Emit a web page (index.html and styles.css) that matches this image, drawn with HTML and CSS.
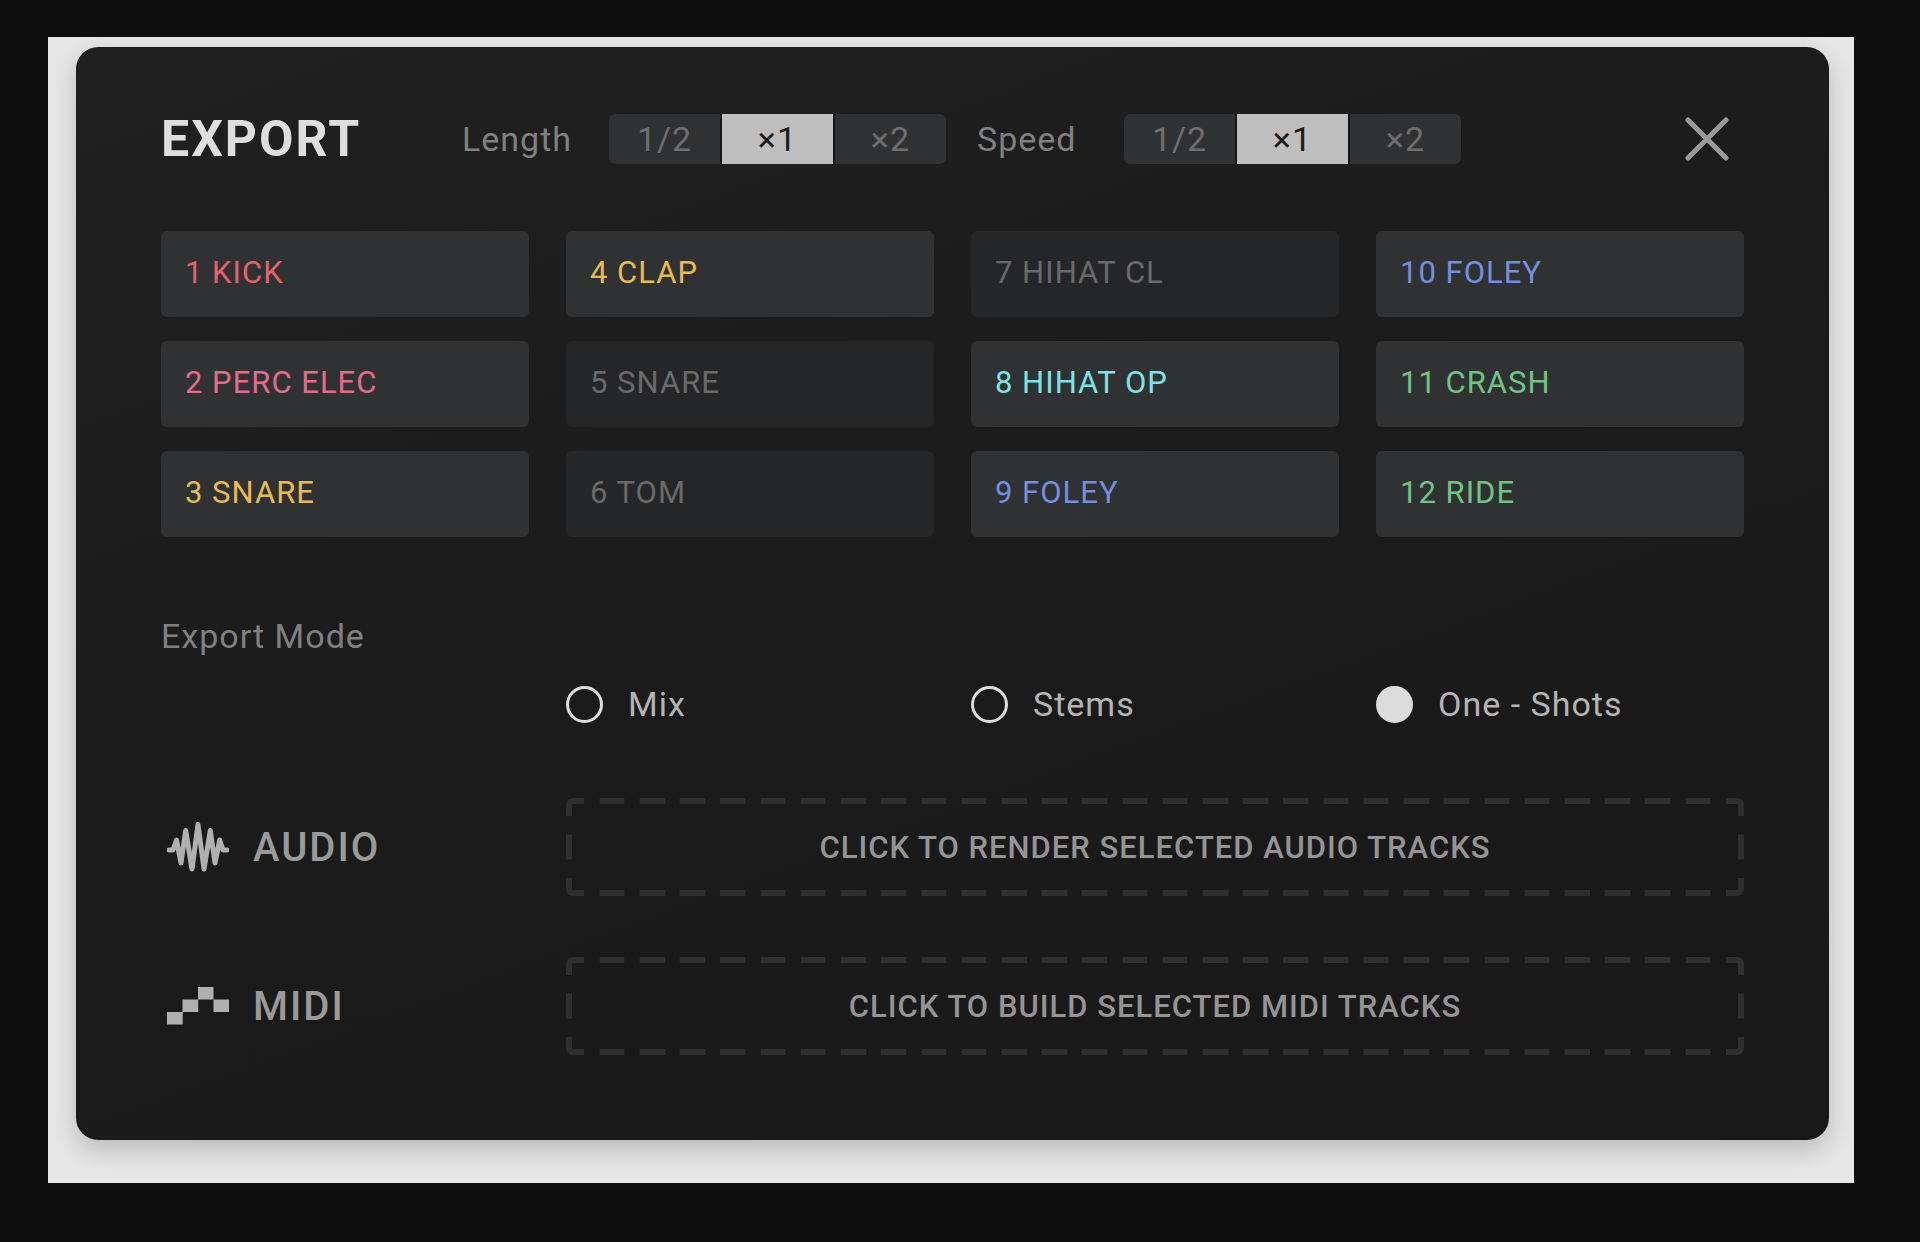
FILE: index.html
```html
<!DOCTYPE html>
<html lang="en">
<head>
  <meta charset="UTF-8">
  <meta name="viewport" content="width=device-width, initial-scale=1.0">
  <title>Export</title>
  <link rel="stylesheet" href="styles.css">
</head>
<body>

  <main class="stage">
    <section class="panel">

      <header class="header">
        <h1>EXPORT</h1>
        <div class="option" role="group" aria-labelledby="lengthLabel">
          <span class="option-label" id="lengthLabel">Length</span>
          <div class="segments">
            <button type="button">1/2</button>
            <button type="button" class="active">×1</button>
            <button type="button">×2</button>
          </div>
        </div>
        <div class="option" role="group" aria-labelledby="speedLabel">
          <span class="option-label" id="speedLabel">Speed</span>
          <div class="segments">
            <button type="button">1/2</button>
            <button type="button" class="active">×1</button>
            <button type="button">×2</button>
          </div>
        </div>
        <button type="button" class="close" aria-label="Close">
          <svg width="44" height="44" viewBox="0 0 44 44" aria-hidden="true">
            <path d="M3 3L41 41M41 3L3 41" />
          </svg>
        </button>
      </header>

      <!-- Tracks, filled column by column -->
      <div class="tracks">
        <button type="button" class="track red">1 KICK</button>
        <button type="button" class="track pink">2 PERC ELEC</button>
        <button type="button" class="track yellow">3 SNARE</button>
        <button type="button" class="track yellow">4 CLAP</button>
        <button type="button" class="track off">5 SNARE</button>
        <button type="button" class="track off">6 TOM</button>
        <button type="button" class="track off">7 HIHAT CL</button>
        <button type="button" class="track cyan">8 HIHAT OP</button>
        <button type="button" class="track blue">9 FOLEY</button>
        <button type="button" class="track blue">10 FOLEY</button>
        <button type="button" class="track green">11 CRASH</button>
        <button type="button" class="track green">12 RIDE</button>
      </div>

      <h2 id="modeLabel">Export Mode</h2>
      <div class="modes" role="radiogroup" aria-labelledby="modeLabel">
        <label class="mode"><input type="radio" name="mode" value="mix">Mix</label>
        <label class="mode"><input type="radio" name="mode" value="stems">Stems</label>
        <label class="mode"><input type="radio" name="mode" value="oneshots" checked>One - Shots</label>
      </div>

      <div class="output">
        <div class="output-name">
          <svg width="62" height="50" viewBox="0 0 62 50" aria-hidden="true">
            <path class="wave" d="M2 28H6L9.5 18L14 41L18.7 8.5L25 47L31 2.5L37 47L43.3 8.5L48 41L52.7 18L56 28H60" />
          </svg>
          <span>AUDIO</span>
        </div>
        <button type="button" class="drop">CLICK TO RENDER SELECTED AUDIO TRACKS</button>
      </div>

      <div class="output">
        <div class="output-name">
          <svg width="62" height="38" viewBox="0 0 62 38" aria-hidden="true">
            <path class="steps" d="M0 25h15.7v12.5H0zM15.5 12.5h15.7V25H15.5zM31 0h15.5v12.5H31zM46.5 12.5H62V25H46.5z" />
          </svg>
          <span>MIDI</span>
        </div>
        <button type="button" class="drop">CLICK TO BUILD SELECTED MIDI TRACKS</button>
      </div>

    </section>
  </main>

  <script>
    // Length / speed switches
    document.querySelectorAll('.segments').forEach(function(group) {
      group.addEventListener('click', function(e) {
        if (e.target.tagName !== 'BUTTON') return;
        group.querySelector('.active').classList.remove('active');
        e.target.classList.add('active');
      });
    });
  </script>

</body>
</html>
```

FILE: styles.css
```css
* {
  margin: 0;
  padding: 0;
  box-sizing: border-box;
}
body {
  background-color: #0e0e0e;
  font-family: Roboto, 'Liberation Sans', sans-serif;
  color: #b4b4b4;
  padding: 37px 66px 57px 48px;
}
button {
  font-family: inherit;
  border: none;
  background: none;
  color: inherit;
  cursor: pointer;
}
.stage {
  background-color: #e6e6e6;
  padding: 10px 25px 43px 28px;
  overflow: hidden;
}
.panel {
  background: linear-gradient(160deg, #202020, #1b1b1b 45%, #181818);
  border-radius: 22px;
  padding: 67px 85px 85px;
  box-shadow: 0 10px 24px rgba(0, 0, 0, 0.19);
}

/* Header */
.header {
  display: flex;
  align-items: center;
  padding-right: 15px;
  margin-bottom: 67px;
}
h1 {
  width: 301px;
  font-size: 50px;
  line-height: 50px;
  font-weight: 700;
  letter-spacing: 2px;
  color: #dedede;
}
.option {
  display: flex;
  align-items: center;
  margin-right: 31px;
}
.option-label {
  width: 147px;
  font-size: 34px;
  letter-spacing: 1px;
  color: #808080;
}
.segments {
  display: flex;
  gap: 2px;
  border-radius: 6px;
  overflow: hidden;
  background-color: #141414;
}
.segments button {
  width: 111px;
  height: 50px;
  font-size: 34px;
  letter-spacing: 1px;
  background-color: #303133;
  color: #6e6e6e;
}
.segments .active {
  background-color: #bebebe;
  color: #1c1c1c;
}
.close {
  margin-left: auto;
  height: 44px;
}
.close path {
  fill: none;
  stroke: #9a9a9a;
  stroke-width: 5;
  stroke-linecap: round;
}

/* Tracks */
.tracks {
  display: grid;
  grid-template-columns: repeat(4, 1fr);
  grid-template-rows: repeat(3, 86px);
  grid-auto-flow: column;
  gap: 24px 37px;
  margin-bottom: 79px;
}
.track {
  background-color: #303133;
  border-radius: 6px;
  padding: 0 24px 4px;
  font-size: 31px;
  letter-spacing: 1px;
  text-align: left;
}
.red { color: #e0646a; }
.pink { color: #e46c8a; }
.yellow { color: #e8ba57; }
.cyan { color: #80e2e8; }
.blue { color: #738fe0; }
.green { color: #70c482; }
.off {
  background-color: #252628;
  color: #6a6a6a;
}

/* Export mode */
h2 {
  font-size: 34px;
  line-height: 40px;
  font-weight: 400;
  letter-spacing: 1px;
  color: #808080;
}
.modes {
  display: grid;
  grid-template-columns: repeat(4, 1fr);
  column-gap: 37px;
  margin: 28px 0 74px;
}
.mode {
  display: flex;
  align-items: center;
  gap: 25px;
  font-size: 34px;
  line-height: 40px;
  letter-spacing: 1px;
}
.mode:first-child {
  grid-column: 2;
}
.mode input {
  appearance: none;
  width: 37px;
  height: 37px;
  border: 3px solid #dcdcdc;
  border-radius: 50%;
}
.mode input:checked {
  background-color: #dcdcdc;
}

/* Render / build rows */
.output {
  display: grid;
  grid-template-columns: repeat(4, 1fr);
  column-gap: 37px;
}
.output + .output {
  margin-top: 61px;
}
.output-name {
  display: flex;
  align-items: center;
  gap: 24px;
  padding-left: 6px;
  font-size: 40px;
  font-weight: 500;
  letter-spacing: 2px;
  color: #9a9a9a;
}
.wave {
  fill: none;
  stroke: #b0b0b0;
  stroke-width: 5;
  stroke-linecap: round;
  stroke-linejoin: round;
}
.steps {
  fill: #b0b0b0;
}
.drop {
  grid-column: 2 / 5;
  height: 98px;
  border: solid transparent;
  border-width: 27px 26px;
  border-image: url("data:image/svg+xml,%3Csvg xmlns='http://www.w3.org/2000/svg' width='92' height='98' fill='none' stroke='%232f2f30' stroke-width='6'%3E%3Cpath d='M3 18V7a4 4 0 0 1 4-4H18M74 3H85a4 4 0 0 1 4 4V18M89 80V91a4 4 0 0 1-4 4H74M18 95H7a4 4 0 0 1-4-4V80M33.5 3h25M33.5 95h25M3 36.500v25M89 36.500v25'/%3E%3C/svg%3E") 27 26 round;
  font-size: 31px;
  font-weight: 500;
  letter-spacing: 1px;
  color: #949494;
}
```
